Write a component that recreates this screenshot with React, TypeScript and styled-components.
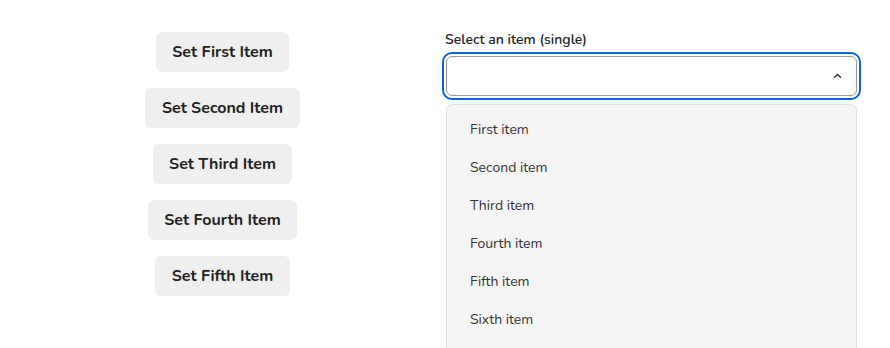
import React from 'react';
import styled, { createGlobalStyle } from 'styled-components';

const GlobalStyle = createGlobalStyle`
  body {
    margin: 0;
    background: #ffffff;
    font-family: 'Nunito', 'Lato', 'Noto Sans', sans-serif;
    color: #222;
  }
`;

const buttons = ['Set First Item', 'Set Second Item', 'Set Third Item', 'Set Fourth Item', 'Set Fifth Item'];
const items = ['First item', 'Second item', 'Third item', 'Fourth item', 'Fifth item', 'Sixth item'];

const App = (): JSX.Element => {
  return (
    <>
      <GlobalStyle />
      <Page>
        <ButtonColumn>
          {buttons.map((b) => (
            <SetButton key={b}>{b}</SetButton>
          ))}
        </ButtonColumn>
        <SelectColumn>
          <Label>Select an item (single)</Label>
          <SelectBox>
            <Chevron viewBox="0 0 10 6" width="9" height="6">
              <path d="M1.2 5 L5 1.4 L8.8 5" fill="none" stroke="#333" strokeWidth="1.6" />
            </Chevron>
          </SelectBox>
          <Menu>
            {items.map((i) => (
              <MenuItem key={i}>{i}</MenuItem>
            ))}
          </Menu>
        </SelectColumn>
      </Page>
    </>
  );
};

const Page = styled.div`
  display: grid;
  grid-template-columns: 446px 411px;
  height: 348px;
  overflow: hidden;
`;

const ButtonColumn = styled.div`
  display: flex;
  flex-direction: column;
  align-items: center;
  gap: 16px;
  padding-top: 32px;
  padding-right: 1px;
`;

const SetButton = styled.button`
  height: 40px;
  padding: 0 16.5px;
  border: none;
  border-radius: 6px;
  background: #efefef;
  font-family: inherit;
  font-size: 16px;
  font-weight: 700;
  color: #222;
  cursor: pointer;
`;

const SelectColumn = styled.div`
  display: flex;
  flex-direction: column;
  padding-top: 31px;
`;

const Label = styled.label`
  font-size: 14px;
  font-weight: 600;
  line-height: 18px;
  margin-left: -1px;
  color: #222;
`;

const SelectBox = styled.div`
  margin-top: 7px;
  height: 40px;
  border: 1px solid #9a9a9a;
  border-radius: 6px;
  box-sizing: border-box;
  outline: 2px solid #0b64d8;
  outline-offset: 2px;
  display: flex;
  align-items: center;
  justify-content: flex-end;
  padding-right: 14px;
`;

const Chevron = styled.svg`
  display: block;
`;

const Menu = styled.ul`
  list-style: none;
  margin: 8px 0 0;
  padding: 6px 0 40px;
  background: #f5f5f5;
  border: 1px solid #e2e2e2;
  border-radius: 6px;
  box-sizing: border-box;
`;

const MenuItem = styled.li`
  height: 38px;
  line-height: 38px;
  padding-left: 23px;
  font-size: 14px;
  color: #333;
`;

export default App;
